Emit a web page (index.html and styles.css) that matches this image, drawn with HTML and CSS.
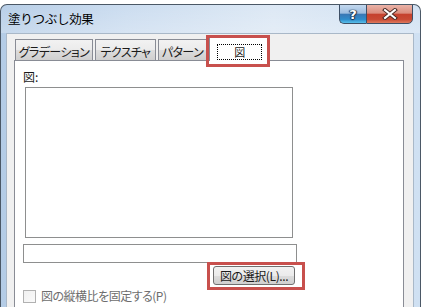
FILE: index.html
```html
<!DOCTYPE html>
<html lang="ja">
<head>
<meta charset="utf-8">
<link rel="stylesheet" href="styles.css">
</head>
<body>
<div class="window">
  <div class="titlebar">
    <span class="title">塗りつぶし効果</span>
    <div class="caption-btns">
      <div class="cap help"><span>?</span></div>
      <div class="cap close">
        <svg width="16" height="12" viewBox="0 0 16 12"><path d="M3 2 L13 10 M13 2 L3 10" stroke="#4a2a25" stroke-width="4" stroke-linecap="square"/><path d="M3 2 L13 10 M13 2 L3 10" stroke="#fff" stroke-width="2" stroke-linecap="square"/></svg>
      </div>
    </div>
  </div>
  <div class="client">
    <div class="tabs">
      <div class="tab">グラデーション</div>
      <div class="tab">テクスチャ</div>
      <div class="tab">パターン</div>
      <div class="tab active"><span class="focus">図</span></div>
    </div>
    <div class="panel">
      <div class="label">図:</div>
      <div class="preview"></div>
      <div class="field"></div>
      <div class="btn-row"><div class="button">図の選択(L)...</div></div>
      <div class="check-row"><span class="checkbox"></span><span class="check-label">図の縦横比を固定する(P)</span></div>
    </div>
  </div>
</div>
<div class="mark mark-tab"></div>
<div class="mark mark-btn"></div>
</body>
</html>
```
FILE: styles.css
```css
html, body {
  margin: 0;
  padding: 0;
  background: #ffffff;
  width: 427px;
  height: 307px;
  overflow: hidden;
  font-family: "Noto Sans CJK JP", "Noto Sans", sans-serif;
  font-size: 12px;
  color: #1a1a1a;
}
.window {
  margin-top: 4px;
  width: 421px;
  height: 303px;
  overflow: hidden;
  box-sizing: border-box;
  border: 1px solid #4b5866;
  border-bottom: none;
  border-radius: 7px 7px 0 0;
  background: linear-gradient(to right, #b4cce6 0%, #c9dbef 30%, #dbe7f4 65%, #cfe0f2 100%);
  display: flex;
  flex-direction: column;
}
.titlebar {
  height: 28px;
  flex: none;
  display: flex;
  align-items: flex-start;
  background: linear-gradient(to bottom, rgba(255,255,255,0.05), rgba(255,255,255,0.25));
}
.title {
  padding-left: 7px;
  line-height: 28px;
  font-size: 12.5px;
  letter-spacing: -0.3px;
  color: #000;
}
.caption-btns {
  margin-left: auto;
  margin-right: 7px;
  margin-top: -1px;
  display: flex;
}
.cap {
  height: 20px;
  box-sizing: border-box;
  border: 1px solid #3d4f66;
  display: flex;
  align-items: center;
  justify-content: center;
}
.help {
  width: 27px;
  border-radius: 0 0 0 5px;
  border-right: none;
  background: linear-gradient(to bottom, #c3d8ee 0%, #9dbde0 45%, #3a78b5 52%, #2f8ccb 80%, #59c0ea 100%);
}
.help span {
  color: #fff;
  font-family: "DejaVu Sans", sans-serif;
  font-weight: bold;
  font-size: 13px;
  line-height: 1;
  text-shadow: 0 0 1px #1d2f4a, 1px 0 1px #1d2f4a, -1px 0 1px #1d2f4a, 0 1px 1px #1d2f4a;
}
.close {
  width: 47px;
  border-radius: 0 0 5px 0;
  background: linear-gradient(to bottom, #eab3a8 0%, #db8d7d 45%, #c5412d 52%, #c84a34 80%, #df7a5f 100%);
}
.client {
  margin: 0 6px 0 5px;
  flex: 1;
  background: #f0f0f0;
  border: 1px solid #a9b8c8;
  border-bottom: none;
  padding: 3px 9px 0 7px;
}
.tabs {
  display: flex;
  align-items: flex-end;
  padding-left: 1px;
  height: 24px;
  margin-bottom: -1px;
  position: relative;
  z-index: 1;
}
.tab {
  height: 21px;
  box-sizing: border-box;
  border: 1px solid #898c95;
  border-bottom: none;
  margin-bottom: 1px;
  background: linear-gradient(to bottom, #f2f2f2 0%, #ebebeb 50%, #dddddd 51%, #cfcfcf 100%);
  display: flex;
  align-items: center;
  justify-content: center;
  font-feature-settings: "palt";
  letter-spacing: -0.6px;
  line-height: 14px;
  padding-top: 4px;
  margin-right: 2px;
}
.tab:nth-child(1) { width: 78px; }
.tab:nth-child(2) { width: 61px; }
.tab:nth-child(3) { width: 49px; }
.tab.active {
  width: 61px;
  height: 24px;
  margin-bottom: 0;
  background: #ffffff;
  align-items: flex-start;
  padding-top: 6px;
}
.focus {
  width: 45px;
  height: 16px;
  box-sizing: border-box;
  border: 1px dotted #000;
  display: flex;
  align-items: center;
  justify-content: center;
  font-size: 11px;
}
.panel {
  height: 300px;
  background: #ffffff;
  border: 1px solid #898c95;
  padding: 9px 0 0 8px;
  font-feature-settings: "palt";
}
.label {
  line-height: 14px;
  height: 14px;
}
.preview {
  margin-top: 3px;
  margin-left: 2px;
  width: 268px;
  height: 151px;
  box-sizing: border-box;
  border: 1px solid #8e8f8f;
}
.field {
  margin-top: 6px;
  width: 274px;
  height: 19px;
  box-sizing: border-box;
  border: 1px solid #8e8f8f;
}
.btn-row {
  width: 274px;
  display: flex;
  justify-content: flex-end;
  margin-top: 3px;
}
.button {
  margin-right: 2px;
  width: 82px;
  height: 19px;
  box-sizing: border-box;
  border: 1px solid #707070;
  border-radius: 3px;
  background: linear-gradient(to bottom, #f2f2f2 0%, #ebebeb 50%, #dddddd 51%, #cfcfcf 100%);
  display: flex;
  align-items: center;
  justify-content: center;
  line-height: 14px;
  letter-spacing: -0.4px;
}
.check-row {
  margin-top: 4px;
  display: flex;
  align-items: center;
}
.checkbox {
  width: 13px;
  height: 13px;
  box-sizing: border-box;
  border: 1px solid #b1b1b1;
  background: linear-gradient(135deg, #f0f0f0, #fafafa);
}
.check-label {
  margin-left: 5px;
  color: #6d6d6d;
  line-height: 14px;
  letter-spacing: -0.5px;
}
.mark {
  position: absolute;
  box-sizing: border-box;
  border: 3px solid #c8504d;
  z-index: 5;
}
.mark-tab {
  left: 206px;
  top: 35px;
  width: 64px;
  height: 32px;
}
.mark-btn {
  left: 207px;
  top: 262px;
  width: 98px;
  height: 28px;
}
```
